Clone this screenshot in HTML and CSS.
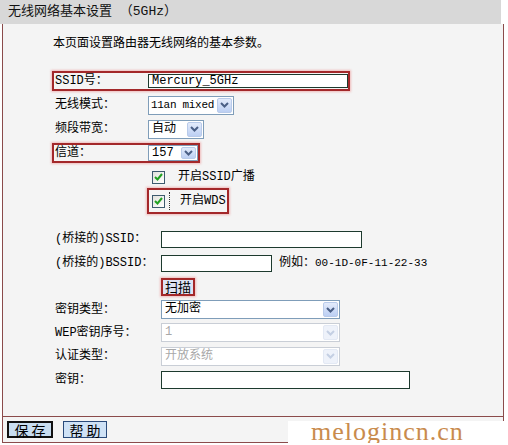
FILE: index.html
```html
<!DOCTYPE html>
<html lang="zh-CN">
<head>
  <meta charset="UTF-8" />
  <title>无线网络基本设置</title>
  <link rel="stylesheet" href="styles.css">
</head>
<body>

  <div class="title">无线网络基本设置 （5GHz）</div>

  <div class="panel">
    <p class="intro">本页面设置路由器无线网络的基本参数。</p>

    <div class="group">
      <div class="row">
        <div class="field mark">
          <span class="label">SSID号：</span>
          <input class="text ssid" type="text" value="Mercury_5GHz" />
        </div>
      </div>
      <div class="row">
        <div class="field">
          <span class="label">无线模式：</span>
          <span class="select w86"><span class="val latin">11an mixed</span><span class="arrow"><svg width="9" height="6" viewBox="0 0 9 6"><polyline points="1,1 4.5,4.5 8,1" fill="none" stroke="#4a5f86" stroke-width="2"/></svg></span></span>
        </div>
      </div>
      <div class="row">
        <div class="field">
          <span class="label">频段带宽：</span>
          <span class="select w56"><span class="val">自动</span><span class="arrow"><svg width="9" height="6" viewBox="0 0 9 6"><polyline points="1,1 4.5,4.5 8,1" fill="none" stroke="#4a5f86" stroke-width="2"/></svg></span></span>
        </div>
      </div>
      <div class="row">
        <div class="field mark">
          <span class="label">信道：</span>
          <span class="select w50 short"><span class="val">157</span><span class="arrow"><svg width="9" height="6" viewBox="0 0 9 6"><polyline points="1,1 4.5,4.5 8,1" fill="none" stroke="#4a5f86" stroke-width="2"/></svg></span></span>
        </div>
      </div>
      <div class="row check">
        <div class="field">
          <span class="box"><svg width="9" height="8" viewBox="0 0 9 8"><polyline points="1,4 3.5,6.5 8,1" fill="none" stroke="#21a121" stroke-width="2"/></svg></span>
          <span class="cb-text">开启SSID广播</span>
        </div>
      </div>
      <div class="row check">
        <div class="field mark pad">
          <span class="box"><svg width="9" height="8" viewBox="0 0 9 8"><polyline points="1,4 3.5,6.5 8,1" fill="none" stroke="#21a121" stroke-width="2"/></svg></span>
          <span class="cb-text focus">开启WDS</span>
        </div>
      </div>
    </div>

    <div class="group g2">
      <div class="row">
        <div class="field">
          <span class="label">(桥接的)SSID：</span>
          <input class="text w201" type="text" value="" />
        </div>
      </div>
      <div class="row">
        <div class="field">
          <span class="label">(桥接的)BSSID：</span>
          <input class="text w111" type="text" value="" />
          <span class="hint">例如：<span class="latin">00-1D-0F-11-22-33</span></span>
        </div>
      </div>
      <div class="row h23">
        <div class="field">
          <span class="label"></span>
          <span class="mark"><button class="scan">扫描</button></span>
        </div>
      </div>
      <div class="row h23">
        <div class="field">
          <span class="label">密钥类型：</span>
          <span class="select w179"><span class="val">无加密</span><span class="arrow"><svg width="9" height="6" viewBox="0 0 9 6"><polyline points="1,1 4.5,4.5 8,1" fill="none" stroke="#4a5f86" stroke-width="2"/></svg></span></span>
        </div>
      </div>
      <div class="row h23">
        <div class="field">
          <span class="label">WEP密钥序号：</span>
          <span class="select w179 off"><span class="val">1</span><span class="arrow"><svg width="9" height="6" viewBox="0 0 9 6"><polyline points="1,1 4.5,4.5 8,1" fill="none" stroke="#c4cfe3" stroke-width="2"/></svg></span></span>
        </div>
      </div>
      <div class="row">
        <div class="field">
          <span class="label">认证类型：</span>
          <span class="select w179 off"><span class="val">开放系统</span><span class="arrow"><svg width="9" height="6" viewBox="0 0 9 6"><polyline points="1,1 4.5,4.5 8,1" fill="none" stroke="#c4cfe3" stroke-width="2"/></svg></span></span>
        </div>
      </div>
      <div class="row">
        <div class="field">
          <span class="label">密钥：</span>
          <input class="text w249" type="text" value="" />
        </div>
      </div>
    </div>
  </div>

  <div class="bar">
    <button class="btn save">保 存</button>
    <button class="btn">帮 助</button>
    <div class="watermark">melogincn.cn</div>
  </div>

</body>
</html>
```

FILE: styles.css
```css
body {
  margin: 0;
  background-color: #fff;
  color: #000;
  font-family: "Liberation Mono", "Noto Sans CJK SC", monospace;
  font-size: 12px;
  line-height: 16px;
}

.latin {
  font-size: 11px;
}

.title {
  width: 493px;
  height: 24px;
  line-height: 23px;
  padding-left: 8px;
  background-color: #d8d8d8;
  font-size: 13px;
  color: #111;
}

.panel {
  margin-left: 2px;
  width: 500px;
  height: 392px;
  border: 1px solid #8b4b4b;
  border-top: none;
  background-color: #f4f4f4;
}

.intro {
  margin: 0;
  padding: 10px 0 0 50px;
  line-height: 20px;
}

.group {
  margin-top: 15px;
}

.g2 {
  margin-top: 14px;
}

.row {
  display: flex;
  align-items: center;
  height: 24px;
  padding-left: 49px;
}

.row.h23 {
  height: 23px;
}

.row.check {
  padding-left: 144px;
}

.field {
  display: flex;
  align-items: center;
  border: 2px solid transparent;
}

.mark {
  display: inline-flex;
  border: 2px solid #a3282a;
  box-shadow: 0 0 2px 1px rgba(235, 120, 120, 0.45);
}

.field.pad {
  padding: 2px 1px 2px 0;
}

.label {
  box-sizing: border-box;
  width: 94px;
  padding-left: 1px;
  white-space: nowrap;
}

.g2 .label {
  width: 107px;
}

/* text inputs */
.text {
  box-sizing: border-box;
  height: 17px;
  margin: 0;
  padding: 0 3px;
  border: 1px solid #1d3a2e;
  background: #fff;
  font: inherit;
}

.ssid {
  width: 200px;
  height: 14px;
  line-height: 12px;
  padding: 0 3px;
}

.w201 { width: 201px; }
.w111 { width: 111px; }
.w249 { width: 249px; height: 18px; }

.hint {
  margin-left: 7px;
  white-space: nowrap;
}

/* xp style dropdowns */
.select {
  box-sizing: border-box;
  display: flex;
  height: 19px;
  border: 1px solid #7f9db9;
  background: #fff;
}

.select.short {
  height: 16px;
}

.select .val {
  flex: 1;
  padding-left: 3px;
  line-height: 17px;
  white-space: nowrap;
  overflow: hidden;
}

.select .val.latin {
  padding-left: 2px;
  letter-spacing: -0.3px;
}

.select.short .val {
  line-height: 14px;
}

.select .arrow {
  box-sizing: border-box;
  flex: none;
  width: 15px;
  margin: 1px;
  display: flex;
  align-items: center;
  justify-content: center;
  border: 1px solid #b9cbea;
  border-radius: 2px;
  background: linear-gradient(#e3ebfb, #bccff3);
}

.select.off {
  border-color: #c9ced6;
  color: #a8a8a8;
}

.select.off .arrow {
  border-color: #e3e9f4;
  background: #eef2fa;
}

.w86 { width: 86px; }
.w56 { width: 56px; }
.w50 { width: 50px; }
.w179 { width: 179px; }

/* checkboxes */
.box {
  box-sizing: border-box;
  width: 13px;
  height: 13px;
  margin-left: 3px;
  display: flex;
  align-items: center;
  justify-content: center;
  border: 1px solid #3d5a6e;
  background: linear-gradient(135deg, #e2e2dc, #fff);
}

.cb-text {
  margin-left: 13px;
  white-space: nowrap;
}

.cb-text.focus {
  margin-left: 4px;
  padding-left: 10px;
  border-left: 1px dotted #333;
  line-height: 18px;
}

.scan {
  height: 14px;
  margin: 0;
  padding: 0 2px;
  border: none;
  background: #dde3f3;
  font-family: "Noto Sans CJK SC", sans-serif;
  font-size: 13px;
  line-height: 14px;
  color: #000;
}

/* bottom buttons */
.bar {
  position: relative;
  display: flex;
  align-items: center;
  gap: 10px;
  box-sizing: border-box;
  margin-left: 2px;
  width: 502px;
  height: 26px;
  padding-left: 4px;
  border: 1px solid #8b4b4b;
  border-top: none;
  background-color: #f4f4f4;
}

.btn {
  box-sizing: border-box;
  width: 44px;
  height: 17px;
  margin: 0;
  padding: 0;
  border: 1px solid #2a4a7a;
  background: #cfe2f6;
  font-family: "Noto Sans CJK SC", sans-serif;
  font-size: 14px;
  line-height: 14px;
  color: #000;
}

.btn.save {
  width: 46px;
  border: 2px solid #111;
  background: #c8ddf0;
}

.watermark {
  position: absolute;
  left: 285px;
  top: 4px;
  width: 193px;
  height: 24px;
  padding-left: 23px;
  background: #fff;
  font-family: "Liberation Serif", serif;
  font-size: 26px;
  line-height: 22px;
  letter-spacing: 1px;
  color: #c98b4d;
}
```
